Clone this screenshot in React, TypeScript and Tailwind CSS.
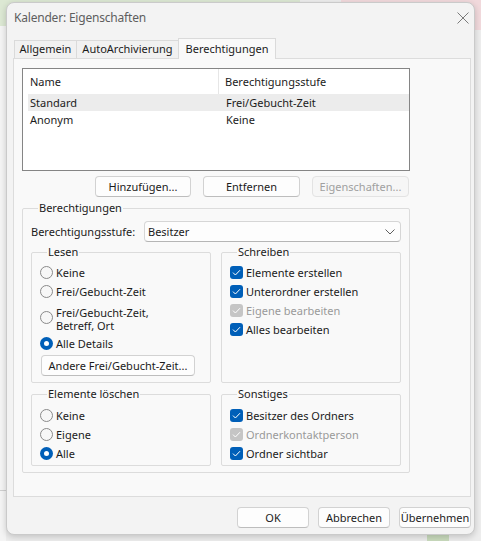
import React from 'react';

const Radio = ({ checked }: { checked?: boolean }) =>
  checked ? (
    <span className="w-[13px] h-[13px] shrink-0 rounded-full bg-[#005fb8] flex items-center justify-center">
      <span className="w-[5px] h-[5px] rounded-full bg-white" />
    </span>
  ) : (
    <span className="w-[13px] h-[13px] shrink-0 rounded-full border border-[#8a8a8a] bg-[#f7f7f7]" />
  );

const Check = ({ disabled }: { disabled?: boolean }) => (
  <span
    className={`w-[13px] h-[13px] shrink-0 rounded-[3px] flex items-center justify-center ${
      disabled ? 'bg-[#c5c5c5]' : 'bg-[#005fb8]'
    }`}
  >
    <svg width="9" height="7" viewBox="0 0 9 7" fill="none">
      <path d="M1 3.6 L3.4 6 L8 1.2" stroke="white" strokeWidth="1" />
    </svg>
  </span>
);

const Group = ({ title, className = '', children }: { title: string; className?: string; children: React.ReactNode }) => (
  <fieldset className={`border border-[#dcdcdc] rounded-[2px] ${className}`}>
    <legend className="ml-[7px] px-[1px] leading-[16px]">{title}</legend>
    {children}
  </fieldset>
);

const Btn = ({ label, w, disabled }: { label: string; w: string; disabled?: boolean }) => (
  <div
    className={`${w} h-[21px] flex items-center justify-center rounded-[4px] border ${
      disabled
        ? 'border-[#e3e3e3] bg-[#f6f6f6] text-[#a0a0a0]'
        : 'border-[#d2d2d2] border-b-[#bdbdbd] bg-[#fdfdfd]'
    }`}
  >
    <span className="translate-y-[1px]">{label}</span>
  </div>
);

const RadioRow = ({ label, checked, h }: { label: string; checked?: boolean; h: string }) => (
  <div className={`${h} flex items-center gap-[3px]`}>
    <Radio checked={checked} />
    <span className="translate-y-[1px]">{label}</span>
  </div>
);

const CheckRow = ({ label, disabled }: { label: string; disabled?: boolean }) => (
  <div className="h-[19px] flex items-center gap-[3px]">
    <Check disabled={disabled} />
    <span className={`translate-y-[1px] ${disabled ? 'text-[#9a9a9a]' : ''}`}>{label}</span>
  </div>
);

export default function App() {
  return (
    <div className="relative w-[481px] h-[541px] overflow-hidden bg-[#ededed] font-['Noto_Sans',sans-serif] text-[11px] text-[#1b1b1b]">
      {/* outlook window behind the dialog */}
      <div className="absolute left-0 top-0 w-[300px] h-[26px] bg-[#dce8d3]" />
      <div className="absolute right-0 top-0 w-[140px] h-[30px] bg-[#f1d9dc]" />
      <div className="absolute left-0 top-[26px] w-[6px] h-[515px] bg-[#f4f4f4]" />
      <div className="absolute left-0 top-[490px] w-[6px] h-px bg-[#cfcfcf]" />
      <div className="absolute left-[427px] bottom-0 w-[22px] h-[8px] bg-[#c9dbbd]" />

      <div className="absolute left-[6px] top-[2px] w-[469px] h-[533px] rounded-[8px] border border-[#cacaca] bg-[#f3f3f3] shadow-[0_2px_6px_rgba(0,0,0,0.18)] flex flex-col">
        {/* title bar */}
        <div className="h-[29px] flex items-center justify-between pl-[7px] pr-[5px]">
          <span className="text-[12px] text-[#5e5e5e] tracking-[-0.2px]">Kalender: Eigenschaften</span>
          <svg width="12" height="12" viewBox="0 0 12 12" fill="none">
            <path d="M0.5 0.5 L11.5 11.5 M11.5 0.5 L0.5 11.5" stroke="#7a7a7a" strokeWidth="1" />
          </svg>
        </div>

        {/* tabs */}
        <div className="mt-[7px] pl-[7px] flex items-end h-[19px]">
          <div className="w-[63px] h-[18px] flex items-center justify-center border border-b-0 border-[#dadada] bg-[#f1f1f1]">
            Allgemein
          </div>
          <div className="-ml-px w-[103px] h-[18px] flex items-center justify-center border border-b-0 border-[#dadada] bg-[#f1f1f1]">
            AutoArchivierung
          </div>
          <div className="relative z-10 -ml-px -mb-px w-[98px] h-[21px] flex items-start pt-[2px] justify-center border border-b-0 border-[#dadada] bg-[#f9f9f9]">
            Berechtigungen
          </div>
        </div>

        {/* tab panel */}
        <div className="ml-[6px] mr-[3px] h-[439px] border border-[#dcdcdc] bg-[#f9f9f9] pl-[8px] pt-[9px]">
          {/* list */}
          <div className="w-[388px] h-[103px] border border-[#858585] bg-white">
            <div className="h-[25px] flex items-center">
              <div className="w-[196px] h-full flex items-center pl-[7px] pt-[2px] border-r border-[#e6e6e6]">Name</div>
              <div className="pl-[6px] pt-[2px]">Berechtigungsstufe</div>
            </div>
            <div className="ml-[5px] h-[17px] flex items-center pt-[1px] bg-[#ececec]">
              <div className="w-[191px] pl-[2px]">Standard</div>
              <div className="pl-[7px]">Frei/Gebucht-Zeit</div>
            </div>
            <div className="ml-[5px] h-[17px] flex items-center pt-[2px]">
              <div className="w-[191px] pl-[2px]">Anonym</div>
              <div className="pl-[7px]">Keine</div>
            </div>
          </div>

          {/* list buttons */}
          <div className="w-[387px] mt-[5px] flex justify-end gap-[12px]">
            <Btn label="Hinzufügen..." w="w-[96px]" />
            <Btn label="Entfernen" w="w-[97px]" />
            <Btn label="Eigenschaften..." w="w-[97px]" disabled />
          </div>

          {/* permissions */}
          <Group title="Berechtigungen" className="mt-[3px] w-[388px] px-[8px] pb-[6px]">
            <div className="mt-[5px] flex items-center">
              <span className="w-[113px] translate-y-[1px]">Berechtigungsstufe:</span>
              <div className="w-[257px] h-[21px] flex items-center justify-between pl-[3px] pr-[5px] rounded-[4px] border border-[#d6d6d6] border-b-[#b5b5b5] bg-[#fdfdfd]">
                <span className="translate-y-[1px]">Besitzer</span>
                <svg width="10" height="6" viewBox="0 0 10 6" fill="none">
                  <path d="M0.5 0.5 L5 5 L9.5 0.5" stroke="#5f5f5f" strokeWidth="1" />
                </svg>
              </div>
            </div>

            <div className="mt-[2px] grid grid-cols-[180px_180px] gap-x-[10px] gap-y-[3px]">
              <Group title="Lesen" className="px-[8px] pb-[6px]">
                <div className="pt-[2px]">
                  <RadioRow label="Keine" h="h-[20px]" />
                  <RadioRow label="Frei/Gebucht-Zeit" h="h-[19px]" />
                  <div className="h-[33px] flex items-center gap-[3px]">
                    <Radio />
                    <span className="flex flex-col leading-[13px] translate-y-[1px]">
                      <span className="h-[13px]">Frei/Gebucht-Zeit,</span>
                      <span className="h-[13px]">Betreff, Ort</span>
                    </span>
                  </div>
                  <RadioRow label="Alle Details" checked h="h-[18px]" />
                  <div className="mt-[3px] ml-[1px]">
                    <Btn label="Andere Frei/Gebucht-Zeit..." w="w-[154px]" />
                  </div>
                </div>
              </Group>

              <Group title="Schreiben" className="px-[8px]">
                <div className="pt-[3px]">
                  <CheckRow label="Elemente erstellen" />
                  <CheckRow label="Unterordner erstellen" />
                  <CheckRow label="Eigene bearbeiten" disabled />
                  <CheckRow label="Alles bearbeiten" />
                </div>
              </Group>

              <Group title="Elemente löschen" className="px-[8px] pb-[2px]">
                <div className="pt-[4px]">
                  <RadioRow label="Keine" h="h-[19px]" />
                  <RadioRow label="Eigene" h="h-[19px]" />
                  <RadioRow label="Alle" checked h="h-[19px]" />
                </div>
              </Group>

              <Group title="Sonstiges" className="px-[8px] pb-[2px]">
                <div className="pt-[4px]">
                  <CheckRow label="Besitzer des Ordners" />
                  <CheckRow label="Ordnerkontaktperson" disabled />
                  <CheckRow label="Ordner sichtbar" />
                </div>
              </Group>
            </div>
          </Group>
        </div>

        {/* footer */}
        <div className="mt-[10px] pr-[3px] flex justify-end gap-[9px]">
          <Btn label="OK" w="w-[72px]" />
          <Btn label="Abbrechen" w="w-[72px]" />
          <Btn label="Übernehmen" w="w-[72px]" />
        </div>
      </div>
    </div>
  );
}
